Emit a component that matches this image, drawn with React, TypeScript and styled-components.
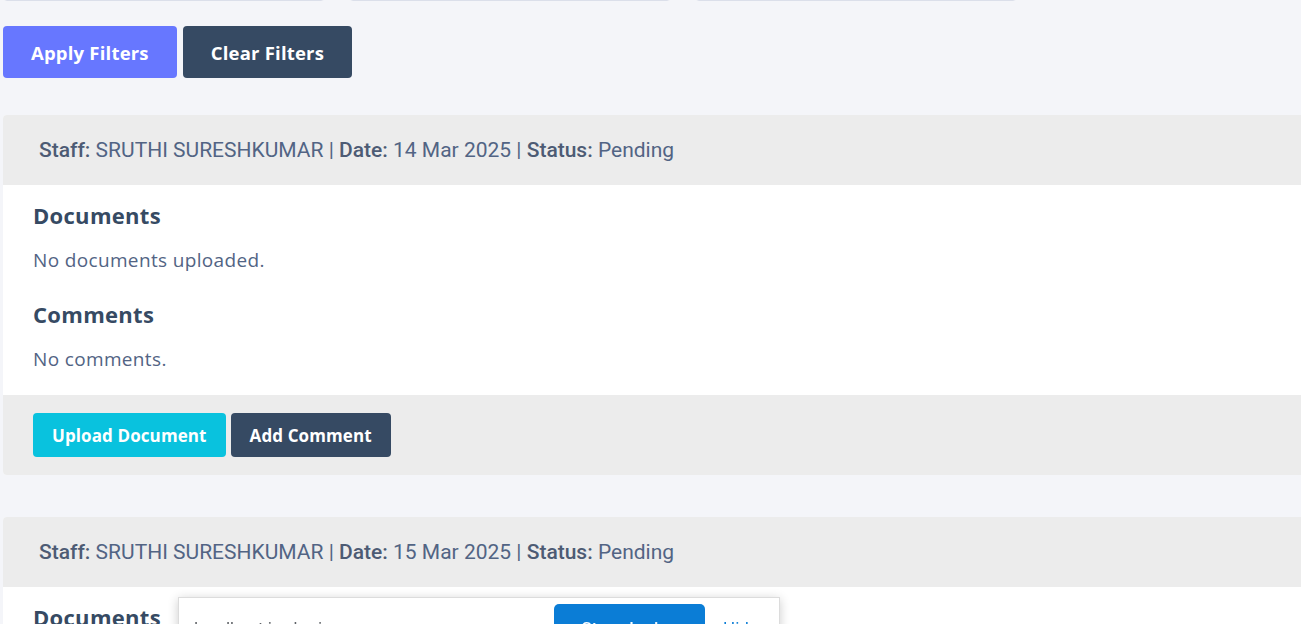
import React from "react";
import styled, { createGlobalStyle } from "styled-components";

const Global = createGlobalStyle`
  html, body { margin: 0; padding: 0; background: #f4f5f9; overflow: hidden; }
  body { font-family: "Open Sans", "Lato", sans-serif; }
  * { box-sizing: border-box; }
`;

const Page = styled.div`
  width: 1330px;
  padding: 0 0 0 3px;
  margin-top: -40px;
  display: flex;
  flex-direction: column;
`;

const FilterRow = styled.div`
  display: flex;
  gap: 24px;
`;

const FilterInput = styled.div`
  width: 322px;
  height: 41px;
  background: #fff;
  border: 1px solid #dbdfea;
  border-radius: 4px;
`;

const ActionRow = styled.div`
  display: flex;
  gap: 6px;
  margin-top: 25px;
`;

const Button = styled.button<{ $bg: string; $big?: boolean }>`
  border: none;
  border-radius: 4px;
  background: ${(p) => p.$bg};
  color: #fff;
  font-family: "Open Sans", "Lato", sans-serif;
  font-weight: 700;
  font-size: ${(p) => (p.$big ? "18.5px" : "17px")};
  letter-spacing: ${(p) => (p.$big ? "0.2px" : "0.1px")};
  height: ${(p) => (p.$big ? "52px" : "44px")};
  padding: ${(p) => (p.$big ? "0 28px" : "0 19px")};
  white-space: nowrap;
  cursor: pointer;
`;

const Card = styled.div`
  margin-top: 37px;
  border-radius: 4px;
  overflow: hidden;
  background: #fff;
  & + & { margin-top: 42px; }
`;

const CardHeader = styled.div`
  height: 70px;
  background: #ececec;
  display: flex;
  align-items: center;
  padding-left: 36px;
  font-family: "Roboto", sans-serif;
  font-size: 21px;
  color: #526484;
  b { font-weight: 500; color: #4d5b74; }
`;

const CardBody = styled.div`
  padding: 15px 30px 23px;
  display: flex;
  flex-direction: column;
`;

const SectionTitle = styled.h3`
  margin: 0;
  font-size: 22px;
  letter-spacing: 0.3px;
  font-weight: 700;
  color: #364a63;
  line-height: 30px;
`;

const Muted = styled.p`
  margin: 18px 0 26px;
  font-size: 19px;
  letter-spacing: 0.35px;
  color: #526484;
  line-height: 25px;
  &:last-child { margin-bottom: 0; }
`;

const CardFooter = styled.div`
  height: 80px;
  background: #ececec;
  display: flex;
  align-items: center;
  gap: 5px;
  padding-left: 30px;
`;

const ShareBar = styled.div`
  position: fixed;
  left: 178px;
  top: 597px;
  width: 602px;
  height: 60px;
  background: #fff;
  border: 1px solid #dcdcdc;
  box-shadow: 0 2px 10px rgba(0, 0, 0, 0.2);
  display: flex;
  align-items: flex-start;
  padding: 6px 0 0 15px;
  font-family: "Roboto", sans-serif;
  font-size: 17px;
`;

const ShareText = styled.span`
  color: #5f6368;
  width: 360px;
  margin-top: 14px;
`;

const StopButton = styled.button`
  width: 151px;
  height: 44px;
  background: #0b7dd6;
  color: #fff;
  border: none;
  border-radius: 5px;
  font-family: "Roboto", sans-serif;
  font-weight: 500;
  font-size: 17px;
  padding-top: 4px;
`;

const HideLink = styled.span`
  color: #0b7dd6;
  margin: 14px 0 0 18px;
`;

const entries = [
  { date: "14 Mar 2025" },
  { date: "15 Mar 2025" },
];

export default function App() {
  return (
    <>
      <Global />
      <Page>
        <FilterRow>
          <FilterInput />
          <FilterInput />
          <FilterInput />
        </FilterRow>
        <ActionRow>
          <Button $big $bg="#6777ff">Apply Filters</Button>
          <Button $big $bg="#364a63">Clear Filters</Button>
        </ActionRow>
        {entries.map((e) => (
          <Card key={e.date}>
            <CardHeader>
              <span>
                <b>Staff:</b> SRUTHI SURESHKUMAR | <b>Date:</b> {e.date} | <b>Status:</b> Pending
              </span>
            </CardHeader>
            <CardBody>
              <SectionTitle>Documents</SectionTitle>
              <Muted>No documents uploaded.</Muted>
              <SectionTitle>Comments</SectionTitle>
              <Muted>No comments.</Muted>
            </CardBody>
            <CardFooter>
              <Button $bg="#09c2de">Upload Document</Button>
              <Button $bg="#364a63">Add Comment</Button>
            </CardFooter>
          </Card>
        ))}
      </Page>
      <ShareBar>
        <ShareText>localhost is sharing your screen.</ShareText>
        <StopButton>Stop sharing</StopButton>
        <HideLink>Hide</HideLink>
      </ShareBar>
    </>
  );
}
